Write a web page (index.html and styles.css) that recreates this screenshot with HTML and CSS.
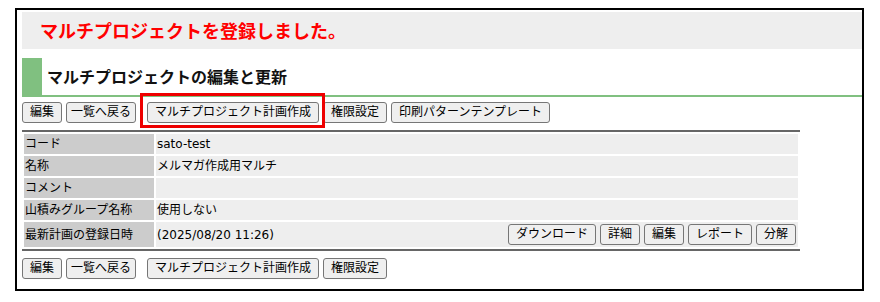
FILE: index.html
```html
<!DOCTYPE html>
<html lang="ja">
<head>
  <meta charset="UTF-8">
  <title>マルチプロジェクトの編集と更新</title>
  <link rel="stylesheet" href="styles.css">
</head>
<body>

  <div class="frame">
    <div class="message">マルチプロジェクトを登録しました。</div>

    <h2 class="heading">マルチプロジェクトの編集と更新</h2>

    <div class="actions">
      <button>編集</button>
      <button class="back">一覧へ戻る</button>
      <span class="marked"><button>マルチプロジェクト計画作成</button></span>
      <button>権限設定</button>
      <button>印刷パターンテンプレート</button>
    </div>

    <table class="detail">
      <tr>
        <th>コード</th>
        <td>sato-test</td>
      </tr>
      <tr>
        <th>名称</th>
        <td>メルマガ作成用マルチ</td>
      </tr>
      <tr>
        <th>コメント</th>
        <td></td>
      </tr>
      <tr>
        <th>山積みグループ名称</th>
        <td>使用しない</td>
      </tr>
      <tr class="tall">
        <th>最新計画の登録日時</th>
        <td>
          <div class="plan">
            <span>(2025/08/20 11:26)</span>
            <div class="plan-buttons">
              <button>ダウンロード</button>
              <button>詳細</button>
              <button>編集</button>
              <button>レポート</button>
              <button>分解</button>
            </div>
          </div>
        </td>
      </tr>
    </table>

    <div class="actions bottom">
      <button>編集</button>
      <button class="back">一覧へ戻る</button>
      <button class="wide-gap">マルチプロジェクト計画作成</button>
      <button>権限設定</button>
    </div>
  </div>

</body>
</html>
```

FILE: styles.css
```css
* {
  box-sizing: border-box;
}

html, body {
  margin: 0;
  background: #fff;
  font-family: "DejaVu Sans", "Noto Sans CJK JP", sans-serif;
  font-size: 12px;
  color: #000;
}

.frame {
  margin: 8px 16px 0 15px;
  border: 2px solid #000;
  padding: 2px 0 10px 5px;
}

.message {
  height: 37px;
  line-height: 37px;
  padding-left: 18px;
  background: #eee;
  color: #f00;
  font-family: "Noto Sans CJK JP", sans-serif;
  font-size: 18px;
  font-weight: bold;
}

.heading {
  margin: 9px 0 0;
  height: 39px;
  line-height: 36px;
  padding-left: 5px;
  border-left: 20px solid #80c080;
  border-bottom: 2px solid #80c080;
  font-family: "Noto Sans CJK JP", sans-serif;
  font-size: 16px;
  font-weight: bold;
  color: #111;
}

.actions {
  display: flex;
  align-items: center;
  gap: 4px;
  margin-top: 5px;
}

.actions.bottom {
  margin-top: 7px;
}

button {
  height: 21px;
  padding: 0 7px;
  border: 1px solid #767676;
  border-radius: 3px;
  background: #efefef;
  font-family: inherit;
  font-size: 12px;
  line-height: 19px;
  color: #000;
  cursor: pointer;
}

button.back {
  padding: 0 4px;
}

.marked,
button.wide-gap {
  margin-left: 7px;
}

/* red annotation frame round one button */
.marked {
  position: relative;
  display: inline-block;
}

.marked::after {
  content: "";
  position: absolute;
  top: -9px;
  bottom: -5px;
  left: -7px;
  right: -6px;
  border: 3px solid #e00;
  pointer-events: none;
}

.detail {
  width: 778px;
  margin-top: 7px;
  border-collapse: separate;
  border-spacing: 2px;
  border-top: 2px solid #666;
  border-bottom: 2px solid #666;
}

.detail tr {
  height: 20px;
}

.detail tr.tall {
  height: 25px;
}

.detail th,
.detail td {
  padding: 0 1px;
  font-weight: normal;
  text-align: left;
  vertical-align: middle;
  line-height: 18px;
}

.detail th {
  width: 130px;
  background: #ccc;
}

.detail td {
  background: #eee;
}

.plan {
  display: flex;
  align-items: center;
  justify-content: space-between;
  padding-right: 1px;
}

.plan-buttons {
  display: flex;
  gap: 4px;
}
```
